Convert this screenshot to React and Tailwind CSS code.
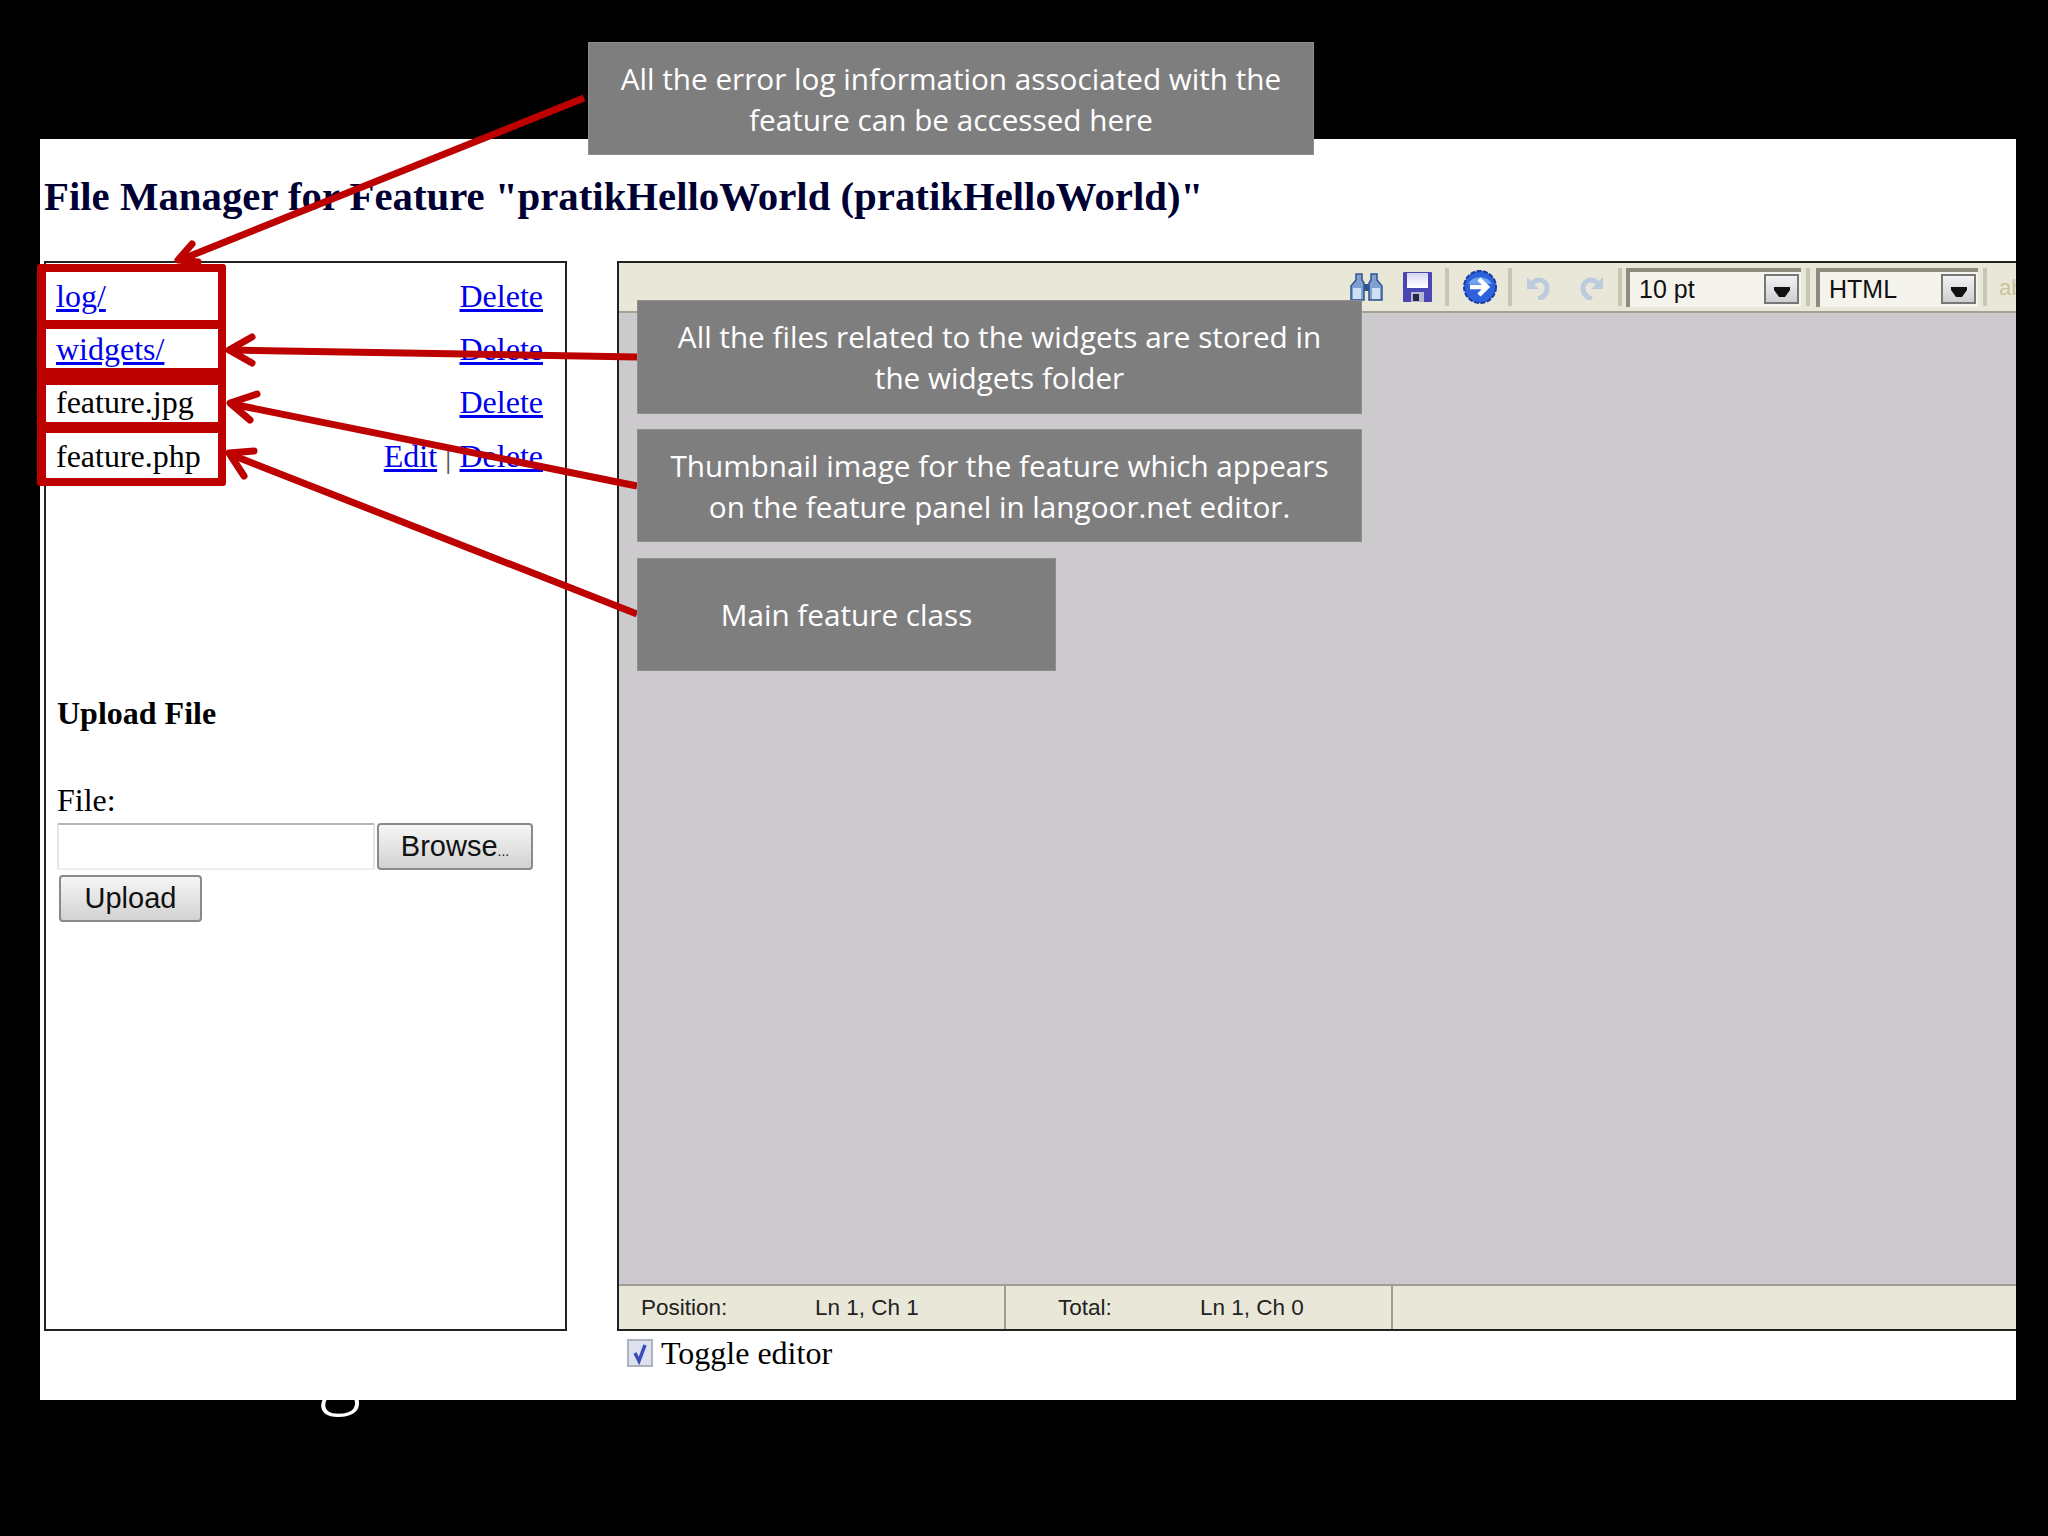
import React from "react";

const serif = "font-['Liberation_Serif',serif]";
const sans = "font-['Liberation_Sans',sans-serif]";

const files = [
  { name: "log/", dir: true },
  { name: "widgets/", dir: true },
  { name: "feature.jpg" },
  { name: "feature.php", edit: true },
];

// Grey callout boxes sitting over the screenshot
const Callout = ({ className, children }) => (
  <div className={`absolute z-20 flex items-center justify-center bg-[#7f7e7f] border border-[#8f8e8f] text-center font-['Open_Sans',sans-serif] text-[29.7px] leading-[41px] text-white ${className}`}>
    <p>{children}</p>
  </div>
);

const Binoculars = () => (
  <svg width="33" height="28" viewBox="0 0 33 28" className="shrink-0">
    <path d="M6 1h6v6l2 3v17H1V13l5-6z" fill="#7fa0d0" stroke="#2f5590" strokeWidth="1.5" />
    <path d="M21 1h6v6l5 6v14H19V10l2-3z" fill="#7fa0d0" stroke="#2f5590" strokeWidth="1.5" />
    <rect x="3" y="15" width="8" height="11" fill="#cfe0f4" />
    <rect x="22" y="15" width="8" height="11" fill="#cfe0f4" />
    <rect x="14" y="11" width="5" height="7" fill="#2f5590" />
  </svg>
);

const Floppy = () => (
  <svg width="29" height="30" viewBox="0 0 29 30" className="ml-[20px] shrink-0">
    <defs>
      <linearGradient id="flop" x1="0" y1="0" x2="0" y2="1">
        <stop offset="0" stopColor="#d9d6f4" />
        <stop offset="1" stopColor="#ffffff" />
      </linearGradient>
    </defs>
    <rect x="0" y="0" width="29" height="30" rx="1" fill="#4a46b4" />
    <rect x="4" y="1" width="21" height="15" fill="url(#flop)" />
    <rect x="8" y="20" width="13" height="10" fill="#b9b8d2" />
    <rect x="10" y="22" width="6" height="7" fill="#26264a" />
  </svg>
);

const GoIcon = () => (
  <svg width="34" height="34" viewBox="0 0 34 34" className="ml-[14px] shrink-0">
    <circle cx="17" cy="17" r="16" fill="#2c62dc" stroke="#1c3c9c" strokeWidth="2" strokeDasharray="5 1.5" />
    <path d="M5 14a13 11 0 0 1 24 0z" fill="#6ea4f2" />
    <path d="M7 17h15M16 9l8 8-8 8" fill="none" stroke="#ffffff" strokeWidth="4.5" />
  </svg>
);

const UndoIcon = ({ className }) => (
  <svg width="24" height="25" viewBox="0 0 24 25" className={`shrink-0 ${className}`}>
    <path d="M12 24c7-2 9-6 9-11 0-5-4-8-8-8-3 0-6 2-7 4" fill="none" stroke="#bccbde" strokeWidth="5" />
    <path d="M1 2v12h12z" fill="#bccbde" />
  </svg>
);

const Sep = ({ className }) => (
  <div className={`h-[38px] w-[4px] shrink-0 bg-[#c6c6b6] ${className}`} />
);

const Select = ({ value, className }) => (
  <div className={`flex h-[39px] shrink-0 items-center justify-between border-l-[4px] border-t-[4px] border-[#8b8b80] bg-[#f5f4ec] pl-[9px] pr-[2px] ${className}`}>
    <span className={`${sans} text-[25px] leading-none text-[#111]`}>{value}</span>
    <div className="flex h-[30px] w-[35px] flex-col items-center justify-center border-2 border-[#77777a] bg-gradient-to-b from-[#f2f2f2] to-[#cfcfcf] pt-[6px]">
      <svg width="16" height="10" viewBox="0 0 16 10">
        <path d="M0 0h16v3l-5 7H5L0 3z" fill="#111" />
      </svg>
    </div>
  </div>
);

const Button = ({ className, children }) => (
  <button className={`${sans} h-[47px] rounded-[4px] border-2 border-[#8a8a8a] bg-gradient-to-b from-[#f6f6f6] to-[#d2d2d2] text-[29px] leading-none text-[#111] ${className}`}>
    {children}
  </button>
);

const Overlay = () => (
  <svg className="absolute left-0 top-0 z-10" width="2048" height="1536" viewBox="0 0 2048 1536">
    {/* frames round the file list */}
    <path
      fillRule="evenodd"
      fill="#bd0000"
      d="M40 264H223a3 3 0 0 1 3 3V483a3 3 0 0 1-3 3H40a3 3 0 0 1-3-3V267a3 3 0 0 1 3-3Z M46 272V320H218V272Z M46 329V368H218V329Z M46 385V422H218V385Z M46 433V478H218V433Z"
    />
    <g fill="none" stroke="#bd0000" strokeWidth="7" strokeLinecap="round" strokeLinejoin="round">
      <path d="M584 98L180 260" strokeLinecap="butt" />
      <path d="M192 244L178 260L198 262" />
      <path d="M637 357L232 350" strokeLinecap="butt" />
      <path d="M252 337L229 350L252 363" />
      <path d="M637 486L232 404" strokeLinecap="butt" />
      <path d="M257 394L230 403L250 420" />
      <path d="M637 614L232 455" strokeLinecap="butt" />
      <path d="M254 451L229 453L244 476" />
    </g>
  </svg>
);

export default function App() {
  return (
    <div className="relative h-[1536px] w-[2048px] overflow-hidden bg-black pl-[40px] pt-[139px]">
      {/* big slide heading left behind the screenshot */}
      <p className="absolute left-[145px] top-[1312px] font-['Open_Sans',sans-serif] text-[80px] font-light leading-[110px] text-white">
        change of
      </p>

      <div className={`relative h-[1261px] w-[1976px] overflow-hidden bg-white pl-[4px] pt-[36px] ${serif}`}>
        <h1 className="h-[44px] whitespace-nowrap text-[40.8px] font-bold leading-[44px] text-[#000033]">
          File Manager for Feature "pratikHelloWorld (pratikHelloWorld)"
        </h1>

        <div className="mt-[42px] flex h-[1070px] gap-[50px]">
          {/* file list */}
          <div className="flex w-[523px] shrink-0 flex-col border-2 border-[#222] pl-[11px] pr-[22px] pt-[6px] text-[32px] text-black">
            {files.map((f) => (
              <div key={f.name} className="flex h-[53.3px] items-center justify-between">
                {f.dir ? (
                  <a className="-ml-[1px] text-[#0000ee] underline">{f.name}</a>
                ) : (
                  <span className="-ml-[1px]">{f.name}</span>
                )}
                <span className="text-[#555]">
                  {f.edit && (
                    <>
                      <a className="text-[#0000ee] underline">Edit</a> |{" "}
                    </>
                  )}
                  <a className="text-[#0000ee] underline">Delete</a>
                </span>
              </div>
            ))}

            <h3 className="mt-[211px] text-[32px] font-bold leading-[40px]">Upload File</h3>
            <label className="mt-[47px] leading-[40px]">File:</label>
            <div className="mt-[3px] flex gap-[2px]">
              <div className="h-[47px] w-[318px] rounded-[2px] border-2 border-b-[#eeeeee] border-l-[#e6e6e6] border-r-[#e6e6e6] border-t-[#b5b5b5] bg-white" />
              <Button className="w-[156px]">Browse<span className="text-[14px]">...</span></Button>
            </div>
            <Button className="ml-[2px] mt-[5px] w-[143px]">Upload</Button>
          </div>

          {/* editor */}
          <div className="flex min-w-0 flex-1 flex-col">
            <div className="flex h-[1070px] shrink-0 flex-col overflow-hidden border-y-2 border-l-2 border-[#222]">
              <div className="flex h-[50px] shrink-0 items-center border-b-2 border-[#a2a294] bg-[#e9e8d8] pl-[731px]">
                <Binoculars />
                <Floppy />
                <Sep className="ml-[13px]" />
                <GoIcon />
                <Sep className="ml-[11px]" />
                <UndoIcon className="ml-[14px]" />
                <UndoIcon className="ml-[30px] -scale-x-100" />
                <Sep className="ml-[14px]" />
                <Select value="10 pt" className="ml-[4px] w-[175px]" />
                <Sep className="ml-[5px]" />
                <Select value="HTML" className="ml-[6px] w-[162px]" />
                <Sep className="ml-[5px]" />
                <span className={`${sans} ml-[12px] shrink-0 text-[22px] text-[#c8c49a]`}>ab</span>
              </div>

              <div className="flex-1 bg-[#cccacd]" />

              <div className={`flex h-[45px] shrink-0 items-center border-t-2 border-[#9e9e96] bg-[#e9e8d8] text-[22.5px] text-[#222] ${sans}`}>
                <div className="flex h-full w-[387px] items-center border-r-2 border-[#9e9e96] pl-[22px]">
                  <span className="w-[174px]">Position:</span>
                  <span>Ln 1, Ch 1</span>
                </div>
                <div className="flex h-full w-[387px] items-center border-r-2 border-[#9e9e96] pl-[52px]">
                  <span className="w-[142px]">Total:</span>
                  <span>Ln 1, Ch 0</span>
                </div>
              </div>
            </div>
            <label className="ml-[10px] mt-[4px] flex items-center gap-[8px] text-[32px] leading-[36px] text-black">
              <svg width="26" height="28" viewBox="0 0 26 28">
                <rect x="1" y="1" width="24" height="26" fill="#dde1ee" stroke="#aeb3c0" strokeWidth="2" />
                <path d="M8 14l4 8 6-16" fill="none" stroke="#3a4cb6" strokeWidth="3.5" />
              </svg>
              Toggle editor
            </label>
          </div>
        </div>
      </div>

      <Overlay />

      <Callout className="left-[588px] top-[42px] h-[113px] w-[726px]">
        All the error log information associated with the<br />feature can be accessed here
      </Callout>
      <Callout className="left-[637px] top-[300px] h-[114px] w-[725px]">
        All the files related to the widgets are stored in<br />the widgets folder
      </Callout>
      <Callout className="left-[637px] top-[429px] h-[113px] w-[725px]">
        Thumbnail image for the feature which appears<br />on the feature panel in langoor.net editor.
      </Callout>
      <Callout className="left-[637px] top-[558px] h-[113px] w-[419px]">
        Main feature class
      </Callout>
    </div>
  );
}
